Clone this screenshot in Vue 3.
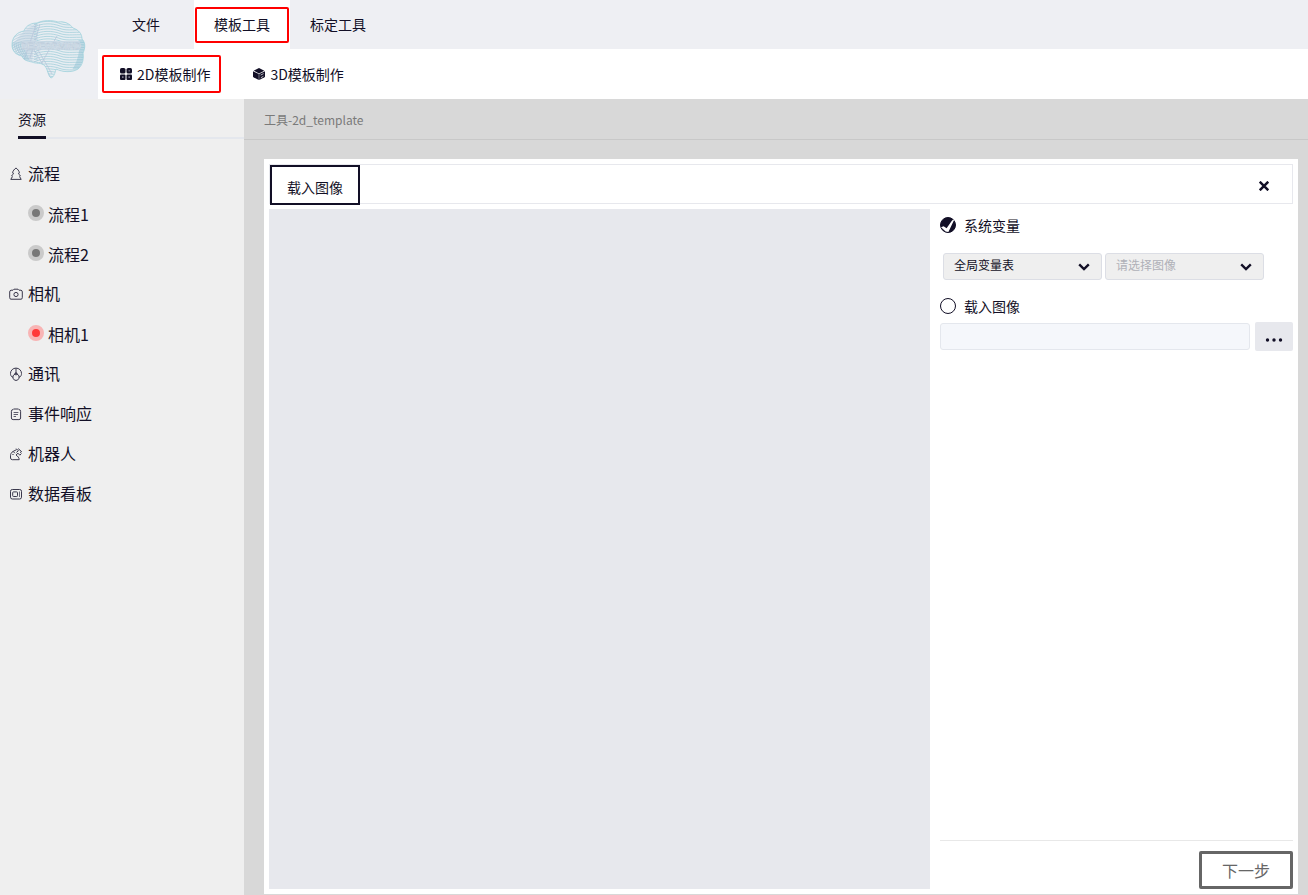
<script setup>
import { ref } from 'vue'

const menus = ['文件', '模板工具', '标定工具']
const activeMenu = ref('模板工具')
const source = ref('system')
const table = ref('global')
const image = ref('')
const path = ref('')

const tree = [
  { name: '流程', icon: 'flow', children: [{ name: '流程1', on: false }, { name: '流程2', on: false }] },
  { name: '相机', icon: 'camera', children: [{ name: '相机1', on: true }] },
  { name: '通讯', icon: 'link', children: [] },
  { name: '事件响应', icon: 'event', children: [] },
  { name: '机器人', icon: 'robot', children: [] },
  { name: '数据看板', icon: 'board', children: [] }
]

// Contour lines of the brain emblem
const contours = Array.from({ length: 26 }, (_, i) => {
  const y = 14 + i * 2.5
  return `M34 ${y + 3}C42 ${y - 1} 52 ${y - 1} 60 ${y + 2}S76 ${y + 2} 90 ${y + 4}`
})
const lobes = Array.from({ length: 16 }, (_, i) => {
  const y = 22 + i * 2.5
  return `M8 ${y + 10}C16 ${y + 2} 26 ${y - 1} 38 ${y + 3}`
})
const shells = Array.from({ length: 6 }, (_, i) => i)
const outline = 'M12 45C12 36 18 32 24 31C26 25 32 23 37 23C43 20 52 20 58 22C65 21 70 24 73 28C79 30 82 34 82 39C86 43 85 49 83 53C84 60 82 66 78 69C72 73 62 72 56 69C55 73 54 77 51 78C48 76 48 70 45 66C41 62 36 64 32 62C27 61 23 60 22 56C16 55 12 51 12 45Z'
</script>

<template>
  <div class="app">
    <header class="top">
      <div class="logo">
        <svg viewBox="0 0 98 98" aria-label="DEXFORMIND">
          <defs>
            <clipPath id="brain"><path :d="outline" /></clipPath>
          </defs>
          <g clip-path="url(#brain)">
            <rect x="10" y="18" width="78" height="62" fill="#e7edf2" />
            <path d="M12 45L24 31L37 23L32 62L22 56Z" fill="#d5e1ea" />
            <g fill="none" stroke="#a3cfdb" stroke-width="0.8">
              <path v-for="d in contours" :key="d" :d="d" />
            </g>
            <g fill="none" stroke="#a9c6d8" stroke-width="0.6">
              <path v-for="d in lobes" :key="d" :d="d" />
            </g>
            <path d="M36 25L24 60M40 24L30 58M57 36L40 66M34 50L50 76M38 50L52 74" fill="none" stroke="#b9c6da" stroke-width="0.8" />
            <g fill="none" stroke="#8fc3d4" stroke-width="0.5">
              <path v-for="i in shells" :key="i" :d="`M${12 + i * 2} 42C${12 + i * 2} ${52 - i} ${17 + i * 2} 56 ${24 + i} 60M${84 - i} 40C${86 - i} 48 ${84 - i} 60 ${78 - i} 69`" />
            </g>
          </g>
          <path :d="outline" fill="none" stroke="#a0d2dc" stroke-width="0.8" />
          <rect x="22" y="41" width="58" height="9" fill="#c9d7e3" opacity="0.8" />
          <text x="51" y="49" text-anchor="middle" class="brand">DEXFORMIND</text>
        </svg>
      </div>
      <nav class="menus">
        <button v-for="m in menus" :key="m" class="menu" :class="{ active: m === activeMenu }" @click="activeMenu = m">
          <span>{{ m }}</span>
        </button>
      </nav>
      <nav class="tools">
        <button class="tool marked">
          <svg width="12" height="12" viewBox="0 0 12 12" fill="#120f26">
            <rect width="5.5" height="5.5" rx="1.6" /><rect x="6.5" width="5.5" height="5.5" rx="1.6" />
            <rect y="6.5" width="5.5" height="5.5" rx="1" /><rect x="6.5" y="6.5" width="5.5" height="5.5" rx="1" />
            <path d="M2 8.3h1.6v1.8H2zM8.4 8.3H10v1.8H8.4zM8.6 2h1.2v1.4H8.6z" fill="#77758a" />
          </svg>
          2D模板制作
        </button>
        <button class="tool">
          <svg width="12" height="12" viewBox="0 0 12 12" fill="#120f26">
            <path d="M6 0L11.3 2.7L6 5.4L.7 2.7Z" /><path d="M0 3.3L5.8 6V12L.5 9.3Q0 9 0 8.5Z" />
            <path d="M12 3.3L6.2 6V12L11.5 9.3Q12 9 12 8.5Z" />
            <path d="M7.6 7.1L10.6 5.6M7.8 9.8L10.4 8.3" stroke="#fff" stroke-width=".7" />
          </svg>
          3D模板制作
        </button>
      </nav>
    </header>

    <aside class="side">
      <div class="side-head"><button class="side-tab">资源</button></div>
      <ul class="tree">
        <li v-for="n in tree" :key="n.name">
          <a href="#" class="node">
            <svg class="ico" width="14" height="14" viewBox="0 0 14 14" fill="none" stroke="#3a384c" stroke-width="1">
              <template v-if="n.icon === 'flow'">
                <path d="M7 1C5.2 2.2 4.2 3.8 3.5 5.5L4.5 6C4 7.2 3.4 8.2 2.6 9L3.4 9.6L1.8 12.4H12.2L10.6 9.6L11.4 9C10.6 8.2 10 7.2 9.5 6L10.5 5.5C9.8 3.8 8.8 2.2 7 1Z" />
              </template>
              <template v-else-if="n.icon === 'camera'">
                <path d="M4 3.2L5 2.2H9L10 3.2H12Q13.3 3.4 13.3 5V10.7Q13.3 12.2 12 12.2H2Q.7 12.2 .7 10.7V5Q.7 3.4 2 3.2Z" /><circle cx="7" cy="7.5" r="2.1" />
              </template>
              <template v-else-if="n.icon === 'link'">
                <path d="M3.8 10.4C2 9.6 1.5 8 1.5 6.4A5.5 5.3 0 0 1 12.5 6.4C12.5 8 12 9.6 10.2 10.4" /><path d="M7 1.3V6.2M7 6.2L3.5 9.2M7 6.2L10.5 9.2M4 9V11.6L6 13.3H8L10 11.6V9" /><circle cx="7" cy="6.8" r="1.1" />
              </template>
              <template v-else-if="n.icon === 'event'">
                <path d="M4.5 2H9.5M4.3 2.5Q2.4 2.5 2.4 4.3V11Q2.4 12.6 4.1 12.6H9.9Q11.6 12.6 11.6 11V4.3Q11.6 2.5 9.7 2.5" /><path d="M4.6 5.5H9.4M4.6 7.5H9M4.6 9.5H7" stroke-width=".8" />
              </template>
              <template v-else-if="n.icon === 'robot'">
                <path d="M5.8 6.2L4.2 4.4C2.4 5.2 1.5 7 1.5 8.8V11Q1.7 12.7 3.3 12.7H10.2C10.2 11 9 9.2 7 8L9 6.2L10.8 8.2L12.5 6.5" /><path d="M4.2 4.4L7.6 2.6M7.2 1.6L9.4 3.8L7.4 5.4M9.2 1.6L12.6 4.6L11 5.6" /><path d="M3.4 7.5h1.2" />
              </template>
              <template v-else>
                <rect x="1.5" y="2.5" width="11" height="9.5" rx="1.8" /><rect x="3.7" y="4.9" width="4.8" height="4.6" rx=".8" /><path d="M10.5 4.5V10" stroke-width=".7" />
              </template>
            </svg>
            {{ n.name }}
          </a>
          <ul v-if="n.children.length">
            <li v-for="c in n.children" :key="c.name">
              <a href="#" class="node child"><i class="dot" :class="{ on: c.on }"></i>{{ c.name }}</a>
            </li>
          </ul>
        </li>
      </ul>
    </aside>

    <main class="main">
      <div class="crumb">工具-2d_template</div>
      <section class="panel">
        <div class="panel-head">
          <button class="load">载入图像</button>
          <button class="close" aria-label="关闭">
            <svg width="10" height="10" viewBox="0 0 10 10" stroke="#120f26" stroke-width="2.5" stroke-linecap="square"><path d="M1.6 1.6L8.4 8.4M8.4 1.6L1.6 8.4" /></svg>
          </button>
        </div>
        <div class="panel-body">
          <div class="canvas"></div>
          <form class="form" @submit.prevent>
            <label class="option">
              <span class="radio">
                <input v-model="source" type="radio" name="source" value="system" />
                <svg v-if="source === 'system'" width="16" height="16" viewBox="0 0 16 16" fill="#fff"><path d="M1 10.2L3.6 9.2L6.6 11.2L12.2 3.2L14.2 2.8L8.4 15L5.6 14.6Z" /></svg>
              </span>
              系统变量
            </label>
            <div class="selects">
              <span class="pick">
                <select v-model="table" aria-label="变量表"><option value="global">全局变量表</option></select>
                <svg width="12" height="8" viewBox="0 0 12 8" fill="none" stroke="#120f26" stroke-width="2.4"><path d="M1.2 1.4L6 6L10.8 1.4" /></svg>
              </span>
              <span class="pick">
                <select v-model="image" aria-label="图像" :class="{ empty: !image }"><option value="">请选择图像</option></select>
                <svg width="12" height="8" viewBox="0 0 12 8" fill="none" stroke="#120f26" stroke-width="2.4"><path d="M1.2 1.4L6 6L10.8 1.4" /></svg>
              </span>
            </div>
            <label class="option">
              <span class="radio">
                <input v-model="source" type="radio" name="source" value="file" />
                <svg v-if="source === 'file'" width="16" height="16" viewBox="0 0 16 16" fill="#fff"><path d="M1 10.2L3.6 9.2L6.6 11.2L12.2 3.2L14.2 2.8L8.4 15L5.6 14.6Z" /></svg>
              </span>
              载入图像
            </label>
            <div class="file">
              <input v-model="path" type="text" aria-label="图像路径" />
              <button type="button" class="browse" aria-label="浏览">
                <svg width="18" height="4" viewBox="0 0 18 4" fill="#120f26"><circle cx="2.5" cy="2" r="1.7" /><circle cx="9" cy="2" r="1.7" /><circle cx="15.5" cy="2" r="1.7" /></svg>
              </button>
            </div>
            <div class="foot"><button type="button" class="next">下一步</button></div>
          </form>
        </div>
      </section>
    </main>
  </div>
</template>

<style>
body {
  margin: 0;
}
</style>

<style scoped>
.app {
  display: grid;
  grid-template-columns: 244px 1fr;
  grid-template-rows: auto 1fr;
  min-height: 100vh;
  font-family: "Noto Sans CJK SC", sans-serif;
  font-size: 14px;
  line-height: 20px;
  color: #120f26;
  background: #efefef;
}
.app * {
  box-sizing: border-box;
}
button,
input,
select {
  font: inherit;
  color: inherit;
  margin: 0;
  padding: 0;
  border: 0;
  background: none;
}
svg {
  display: block;
  flex: none;
}
.top {
  grid-column: 1 / 3;
  display: grid;
  grid-template-columns: 98px 1fr;
  grid-template-rows: 49px 50px;
  background: #eeeff3;
}
.logo {
  grid-row: 1 / 3;
}
.logo svg {
  width: 98px;
  height: 98px;
}
.brand {
  font-family: "Liberation Sans", sans-serif;
  font-size: 9px;
  fill: #f1f5f9;
  stroke: #a9bccf;
  stroke-width: 0.3px;
}
.menus {
  display: flex;
}
.menu {
  width: 96px;
  display: flex;
  align-items: center;
  justify-content: center;
}
.menu span {
  padding: 5px 17px 7px;
  border: 2px solid transparent;
  border-radius: 2px;
}
.menu.active {
  background: #fff;
}
.menu.active span {
  border-color: #f00;
}
.tools {
  display: flex;
  align-items: center;
  padding-left: 4px;
  background: #fff;
}
.tool {
  display: flex;
  align-items: center;
  gap: 5px;
  height: 38px;
  padding: 0 9px 0 16px;
  border: 2px solid transparent;
  border-radius: 2px;
}
.tool + .tool {
  margin-left: 14px;
}
.tool.marked {
  border-color: #f00;
}
.side-head {
  height: 40px;
  padding-left: 18px;
  background: linear-gradient(#e4e7ed, #e4e7ed) 18px 38px / 100% 2px no-repeat;
}
.side-tab {
  height: 40px;
  padding-top: 3px;
  border-bottom: 3px solid #120f26;
}
ul {
  margin: 0;
  padding: 0;
  list-style: none;
}
.tree {
  padding-top: 15px;
}
.node {
  display: flex;
  align-items: center;
  gap: 5px;
  height: 40px;
  padding: 0 0 2px 9px;
  font-size: 16px;
  color: inherit;
  text-decoration: none;
}
.node .ico {
  margin-top: 2px;
}
.node.child {
  gap: 4px;
  padding: 0 0 1px 28px;
}
.dot {
  width: 16px;
  height: 16px;
  margin-bottom: 1px;
  border: 4px solid #cacaca;
  border-radius: 50%;
  background: #777;
}
.dot.on {
  border-color: #f8b4b4;
  background: #ff3838;
}
.main {
  display: flex;
  flex-direction: column;
  background: #d8d8d8;
}
.crumb {
  height: 41px;
  padding: 11px 20px;
  border-bottom: 1px solid #c8c8c8;
  font-size: 12px;
  color: #7a7a7a;
}
.panel {
  flex: 1;
  display: flex;
  flex-direction: column;
  gap: 5px;
  margin: 19px 10px 1px 20px;
  padding: 5px;
  background: #fff;
}
.panel-head {
  display: flex;
  justify-content: space-between;
  height: 40px;
  border: 1px solid #e7e8ed;
}
.load {
  width: 90px;
  height: 40px;
  padding-top: 4px;
  border: 2px solid #120f26;
}
.close {
  width: 56px;
  display: flex;
  align-items: center;
  justify-content: center;
  padding-top: 4px;
}
.panel-body {
  flex: 1;
  display: flex;
  gap: 10px;
}
.canvas {
  flex: 1;
  background: #e7e8ed;
}
.form {
  width: 353px;
  display: flex;
  flex-direction: column;
  padding-top: 6px;
}
.option {
  display: flex;
  align-items: center;
  gap: 8px;
  height: 22px;
  padding-bottom: 2px;
}
.radio {
  position: relative;
  width: 16px;
  height: 16px;
}
.radio input {
  appearance: none;
  display: block;
  width: 16px;
  height: 16px;
  border: 1px solid #120f26;
  border-radius: 50%;
}
.radio input:checked {
  background: #120f26;
}
.radio svg {
  position: absolute;
  inset: 0;
  pointer-events: none;
}
.selects {
  display: flex;
  gap: 3px;
  padding: 16px 29px 16px 3px;
}
.pick {
  position: relative;
  flex: 1;
}
.pick select {
  appearance: none;
  display: block;
  width: 100%;
  height: 27px;
  padding: 0 10px 3px;
  border: 1px solid #dcdee5;
  border-radius: 3px;
  background: #efefef;
  font-size: 12px;
}
.pick select.empty {
  color: #b0b1b8;
}
.pick svg {
  position: absolute;
  right: 12px;
  top: 10px;
  pointer-events: none;
}
.file {
  display: flex;
  align-items: center;
  gap: 5px;
  padding-top: 4px;
}
.file input {
  flex: 1;
  min-width: 0;
  height: 27px;
  padding: 0 8px;
  border: 1px solid #e4e7ed;
  border-radius: 3px;
  background: #f5f7fb;
}
.browse {
  display: flex;
  align-items: center;
  justify-content: center;
  width: 38px;
  height: 29px;
  padding-top: 7px;
  border-radius: 2px;
  background: #e7e8ed;
}
.foot {
  display: flex;
  justify-content: flex-end;
  margin-top: auto;
  padding-top: 10px;
  border-top: 1px solid #e8e8e8;
}
.next {
  width: 94px;
  height: 38px;
  border: 3px solid #666;
  border-radius: 2px;
  font-size: 16px;
  color: #666;
}
</style>
